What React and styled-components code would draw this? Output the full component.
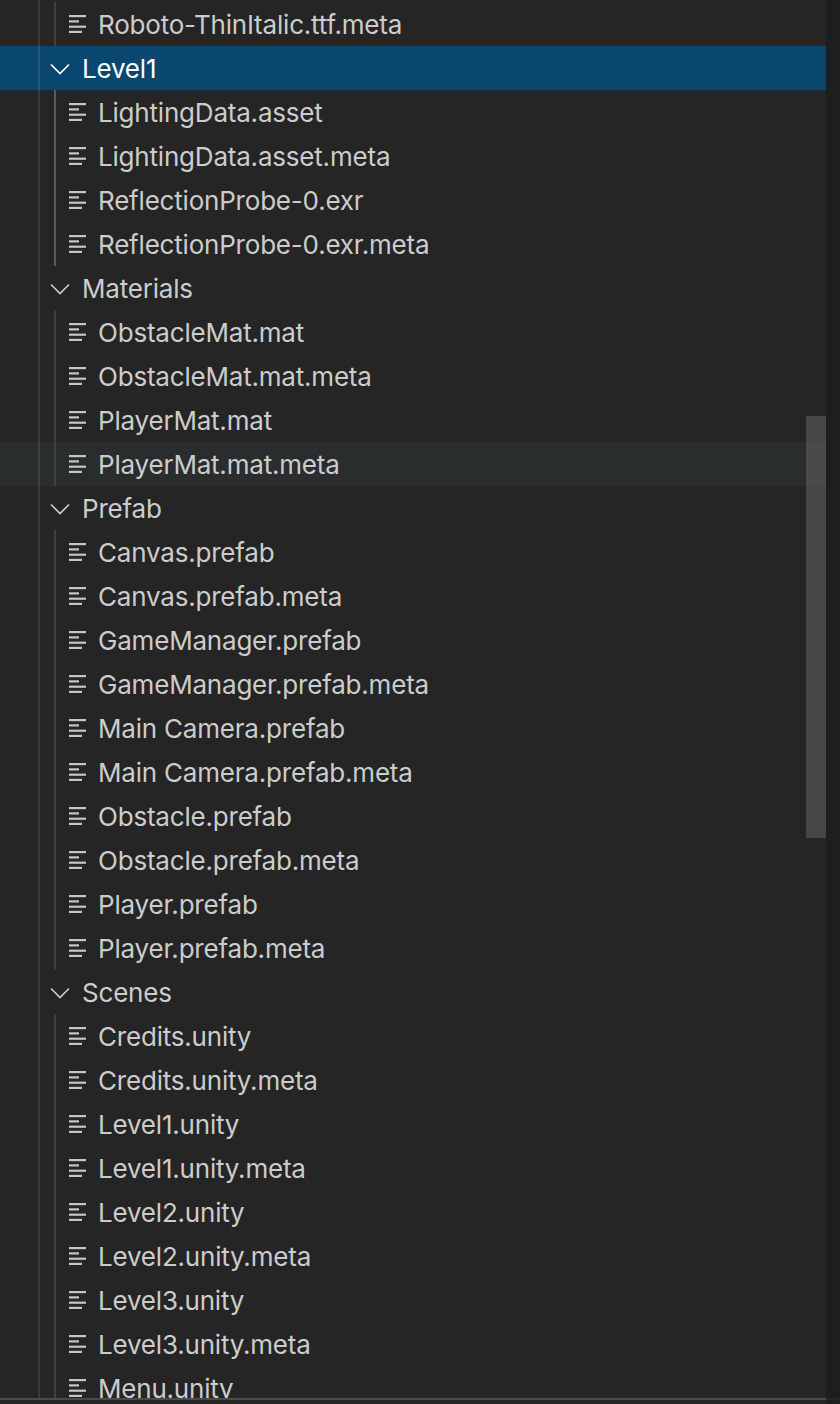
import React from "react";
import styled, { createGlobalStyle } from "styled-components";

const GlobalStyle = createGlobalStyle`
  html, body {
    margin: 0;
    height: 100%;
    background: #1e1e1e;
    overflow: hidden;
  }
`;

const Window = styled.div`
  display: flex;
  flex-direction: column;
  width: 840px;
  height: 1404px;
  overflow: hidden;
  background: #252525;
  font-family: Inter, "Liberation Sans", sans-serif;
`;

const Main = styled.div`
  display: flex;
  flex: 1;
  min-height: 0;
`;

const Panel = styled.div`
  position: relative;
  flex: 1;
  height: 1398px;
  overflow: hidden;
  background: #252525;
  padding-top: 2px;
  box-sizing: border-box;

  &::before {
    content: "";
    position: absolute;
    z-index: 1;
    top: 0;
    bottom: 0;
    left: 38px;
    width: 2px;
    background: rgba(255, 255, 255, 0.1);
  }
`;

const Gutter = styled.div`
  width: 14px;
  background: #1e1e1e;
`;

const Scrollbar = styled.div`
  position: absolute;
  z-index: 2;
  top: 416px;
  right: 0;
  width: 20px;
  height: 422px;
  background: rgba(121, 121, 121, 0.4);
`;

const Group = styled.div`
  position: relative;

  &::before {
    content: "";
    position: absolute;
    z-index: 1;
    top: 0;
    bottom: 0;
    left: 54px;
    width: 2px;
    background: ${(props) => (props.$active ? "#5a5a5a" : "#404040")};
  }
`;

const Row = styled.div`
  display: flex;
  align-items: center;
  height: 44px;
  box-sizing: border-box;
  font-size: 26px;
  letter-spacing: -0.2px;
  white-space: nowrap;
  color: ${(props) => (props.$selected ? "#ffffff" : "#cccccc")};
  background: ${(props) => {
    if (props.$selected) return "#094771";
    if (props.$hover) return "#2a2d2e";
    return "transparent";
  }};
`;

const FolderRow = styled(Row)`
  padding-left: 50px;
  gap: 12px;
`;

const FileRow = styled(Row)`
  padding-left: 69px;
  gap: 12px;
`;

const BottomBorder = styled.div`
  flex: none;
  height: 2px;
  background: #4a4a4a;
  width: 826px;
`;

const BottomStrip = styled.div`
  display: flex;
  justify-content: flex-end;
  flex: none;
  height: 4px;
  background: #252525;
`;

const StripGutter = styled.div`
  width: 14px;
  background: #1e1e1e;
`;

const ChevronIcon = () => (
  <svg width="20" height="14" viewBox="0 0 20 14" fill="none">
    <path d="M1 3.5 L10 12.5 L19 3.5" stroke="currentColor" strokeWidth="1.7" />
  </svg>
);

const FileIcon = () => (
  <svg width="17" height="18" viewBox="0 0 17 18" fill="#c5c5c5">
    <rect x="0" y="0" width="17" height="2.2" />
    <rect x="0" y="5.3" width="10" height="2.2" />
    <rect x="0" y="10.6" width="17" height="2.2" />
    <rect x="0" y="15.8" width="13" height="2.2" />
  </svg>
);

const File = ({ name, hover }) => (
  <FileRow $hover={hover}>
    <FileIcon />
    <span>{name}</span>
  </FileRow>
);

const Folder = ({ name, selected }) => (
  <FolderRow $selected={selected}>
    <ChevronIcon />
    <span>{name}</span>
  </FolderRow>
);

const groups = [
  {
    name: "Level1",
    selected: true,
    files: [
      "LightingData.asset",
      "LightingData.asset.meta",
      "ReflectionProbe-0.exr",
      "ReflectionProbe-0.exr.meta",
    ],
  },
  {
    name: "Materials",
    files: [
      "ObstacleMat.mat",
      "ObstacleMat.mat.meta",
      "PlayerMat.mat",
      "PlayerMat.mat.meta",
    ],
  },
  {
    name: "Prefab",
    files: [
      "Canvas.prefab",
      "Canvas.prefab.meta",
      "GameManager.prefab",
      "GameManager.prefab.meta",
      "Main Camera.prefab",
      "Main Camera.prefab.meta",
      "Obstacle.prefab",
      "Obstacle.prefab.meta",
      "Player.prefab",
      "Player.prefab.meta",
    ],
  },
  {
    name: "Scenes",
    files: [
      "Credits.unity",
      "Credits.unity.meta",
      "Level1.unity",
      "Level1.unity.meta",
      "Level2.unity",
      "Level2.unity.meta",
      "Level3.unity",
      "Level3.unity.meta",
      "Menu.unity",
    ],
  },
];

const App = () => (
  <Window>
    <GlobalStyle />
    <Main>
      <Panel>
        <Group>
          <File name="Roboto-ThinItalic.ttf.meta" />
        </Group>
        {groups.map((group) => (
          <React.Fragment key={group.name}>
            <Folder name={group.name} selected={group.selected} />
            <Group $active={group.selected}>
              {group.files.map((file) => (
                <File
                  key={file}
                  name={file}
                  hover={file === "PlayerMat.mat.meta"}
                />
              ))}
            </Group>
          </React.Fragment>
        ))}
        <Scrollbar />
      </Panel>
      <Gutter />
    </Main>
    <BottomBorder />
    <BottomStrip>
      <StripGutter />
    </BottomStrip>
  </Window>
);

export default App;
